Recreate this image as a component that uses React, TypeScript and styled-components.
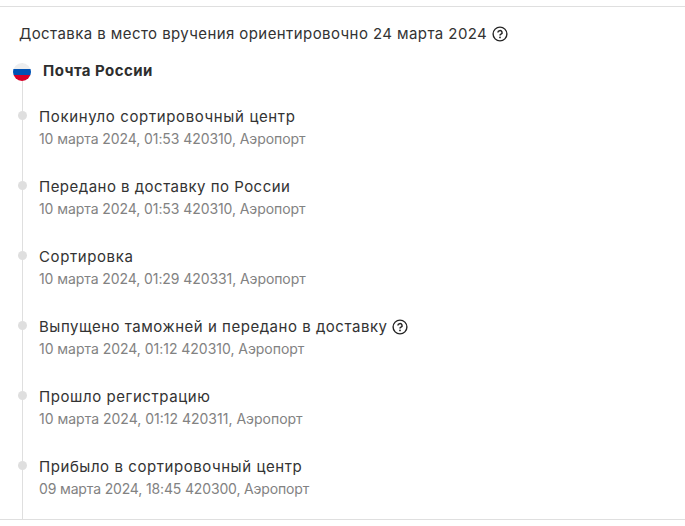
import React from "react";
import styled, { createGlobalStyle } from "styled-components";

const GlobalStyle = createGlobalStyle`
  * { box-sizing: border-box; }
  body { margin: 0; background: #fff; font-family: Inter, "Liberation Sans", sans-serif; }
`;

const Panel = styled.main`
  margin-top: 6px;
  height: 514px;
  border-top: 1px solid #dfdfdf;
  border-bottom: 1px solid #dfdfdf;
  display: flex;
  flex-direction: column;
  overflow: hidden;
  white-space: nowrap;
`;

const Estimate = styled.header`
  display: flex;
  align-items: center;
  gap: 5px;
  height: 24px;
  margin: 15px 0 17px 19px;
`;

const Label = styled.span<{ $spacing: number }>`
  font-size: 15px;
  line-height: 24px;
  letter-spacing: ${(p) => p.$spacing}px;
  color: #333;
`;

const Timeline = styled.section`
  flex: 1;
  display: flex;
  flex-direction: column;
  padding-left: 13px;
  background: linear-gradient(#dfdfdf, #dfdfdf) 22px 0 / 1px 100% no-repeat;
`;

const Carrier = styled.div`
  display: flex;
  align-items: center;
  gap: 12px;
  height: 18px;
`;

const CarrierName = styled.strong`
  padding-bottom: 2px;
  font-size: 15px;
  line-height: 18px;
  font-weight: 700;
  letter-spacing: 0.45px;
  color: #2e2e2e;
`;

const Events = styled.ol`
  list-style: none;
  margin: 24px 0 0;
  padding: 0;
`;

const Event = styled.li`
  display: flex;
  height: 70px;
  padding-left: 5px;
  gap: 12px;
`;

const Dot = styled.span`
  width: 9px;
  height: 9px;
  margin-top: 6px;
  border-radius: 50%;
  background: #dfdfdf;
`;

const EventTitle = styled.div`
  display: flex;
  align-items: center;
  gap: 4px;
  height: 24px;
`;

const Details = styled.div<{ $spacing: number }>`
  font-size: 14px;
  line-height: 20px;
  letter-spacing: ${(p) => p.$spacing}px;
  color: #828282;
`;

const HelpSvg = styled.svg`
  flex: none;
  width: 16px;
  height: 16px;
`;

function HelpIcon() {
  return (
    <HelpSvg viewBox="0 0 16 16" fill="none" stroke="#242424" strokeWidth="1.4">
      <circle cx="8" cy="8" r="6.9" />
      <path d="M5.9 6.5a2.1 1.9 0 1 1 3.1 1.7c-.7.35-1 .6-1 1.3" strokeWidth="1.5" />
      <circle cx="8" cy="11.4" r=".9" fill="#242424" stroke="none" />
    </HelpSvg>
  );
}

function RussianFlag() {
  return (
    <svg width="18" height="18" viewBox="0 0 18 18">
      <clipPath id="flag-circle"><circle cx="9" cy="9" r="9" /></clipPath>
      <g clipPath="url(#flag-circle)">
        <path fill="#eeeeee" d="M0 0h18v6H0z" />
        <path fill="#0052b4" d="M0 6h18v6H0z" />
        <path fill="#d80027" d="M0 12h18v6H0z" />
      </g>
    </svg>
  );
}

const events = [
  { title: "Покинуло сортировочный центр", details: "10 марта 2024, 01:53 420310, Аэропорт", ts: 0.63, ds: -0.08 },
  { title: "Передано в доставку по России", details: "10 марта 2024, 01:53 420310, Аэропорт", ts: 0.48, ds: -0.08 },
  { title: "Сортировка", details: "10 марта 2024, 01:29 420331, Аэропорт", ts: 0.6, ds: -0.08 },
  { title: "Выпущено таможней и передано в доставку", details: "10 марта 2024, 01:12 420310, Аэропорт", ts: 0.52, ds: -0.03, help: true },
  { title: "Прошло регистрацию", details: "10 марта 2024, 01:12 420311, Аэропорт", ts: 0.57, ds: 0 },
  { title: "Прибыло в сортировочный центр", details: "09 марта 2024, 18:45 420300, Аэропорт", ts: 0.56, ds: -0.15 },
];

export default function App() {
  return (
    <>
      <GlobalStyle />
      <Panel>
        <Estimate>
          <Label $spacing={0.42}>Доставка в место вручения ориентировочно 24 марта 2024</Label>
          <HelpIcon />
        </Estimate>
        <Timeline>
          <Carrier>
            <RussianFlag />
            <CarrierName>Почта России</CarrierName>
          </Carrier>
          <Events>
            {events.map((e) => (
              <Event key={e.title}>
                <Dot />
                <div>
                  <EventTitle>
                    <Label $spacing={e.ts}>{e.title}</Label>
                    {e.help && <HelpIcon />}
                  </EventTitle>
                  <Details $spacing={e.ds}>{e.details}</Details>
                </div>
              </Event>
            ))}
          </Events>
        </Timeline>
      </Panel>
    </>
  );
}
